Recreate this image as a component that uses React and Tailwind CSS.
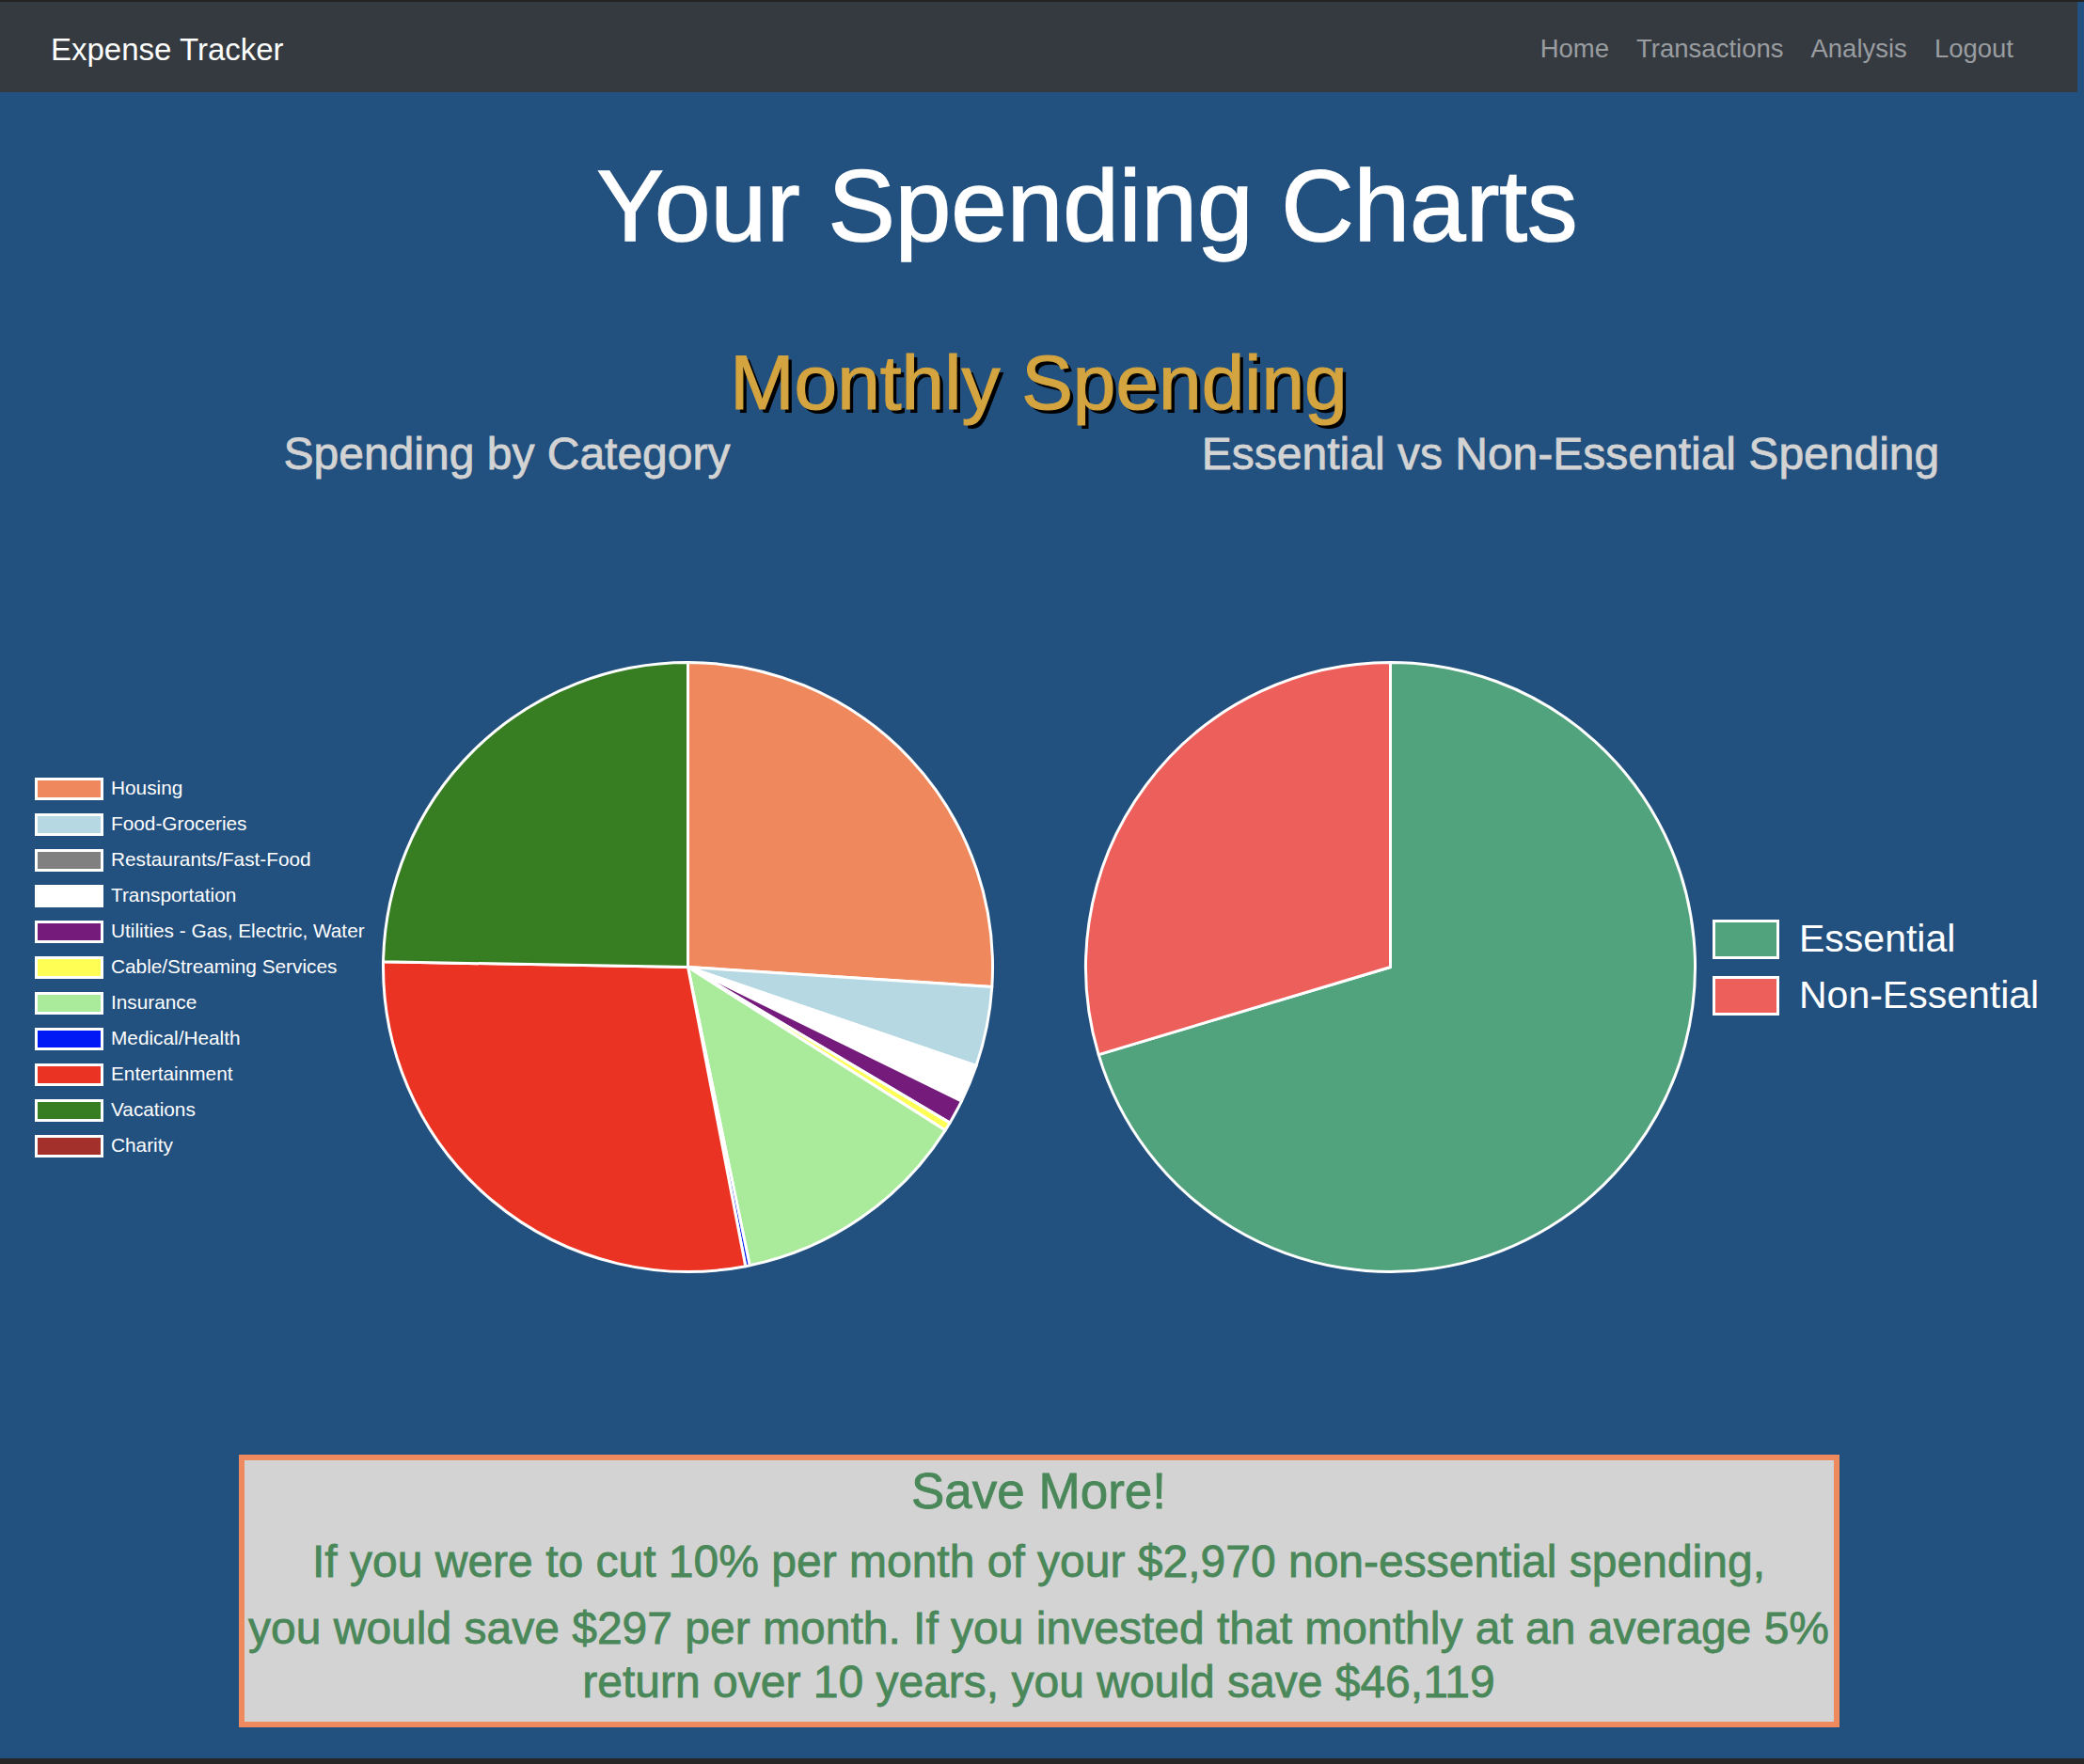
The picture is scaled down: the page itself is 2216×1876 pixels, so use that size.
import React from 'react';

// slice angles are clockwise from 12 o'clock, like chart.js draws them
const categories = [
  { label: 'Housing', color: '#ef885d', start: 0, end: 93.7 },
  { label: 'Food-Groceries', color: '#b6d8e3', start: 93.7, end: 108.9 },
  { label: 'Restaurants/Fast-Food', color: '#808080', start: 108.9, end: 108.9 },
  { label: 'Transportation', color: '#ffffff', start: 108.9, end: 116.1 },
  { label: 'Utilities - Gas, Electric, Water', color: '#741b7b', start: 116.1, end: 120.75 },
  { label: 'Cable/Streaming Services', color: '#fffe54', start: 120.75, end: 122.4 },
  { label: 'Insurance', color: '#a9eb9b', start: 122.4, end: 168.3 },
  { label: 'Medical/Health', color: '#0019f5', start: 168.3, end: 169.1 },
  { label: 'Entertainment', color: '#ea3323', start: 169.1, end: 271 },
  { label: 'Vacations', color: '#377d22', start: 271, end: 360 },
  { label: 'Charity', color: '#a3302b', start: 360, end: 360 },
];

const essentials = [
  { label: 'Essential', color: '#51a37d', start: 0, end: 253.3 },
  { label: 'Non-Essential', color: '#ed5f5a', start: 253.3, end: 360 },
];

const navLinks = ['Home', 'Transactions', 'Analysis', 'Logout'];

function Pie({ slices, size = 653, r = 324 }) {
  const c = size / 2;
  const pt = (deg) => {
    const a = (deg * Math.PI) / 180;
    return [c + r * Math.sin(a), c - r * Math.cos(a)];
  };

  return (
    <svg width={size} height={size} className="shrink-0">
      {slices.filter((s) => s.end > s.start).map((s) => {
        const [x1, y1] = pt(s.start);
        const [x2, y2] = pt(s.end);
        const large = s.end - s.start > 180 ? 1 : 0;
        return (
          <path key={s.label}
            d={`M${c} ${c} L${x1} ${y1} A${r} ${r} 0 ${large} 1 ${x2} ${y2} Z`}
            fill={s.color} stroke="#ffffff" strokeWidth="3" strokeLinejoin="round" />
        );
      })}
    </svg>
  );
}

export default function App() {
  return (
    <div className="min-h-[1876px] flex flex-col bg-[#22507f] font-['Liberation_Sans',Arial,sans-serif]">
      <div className="h-[2px] bg-[#232323]" />

      <nav className="mr-[7px] h-[96px] pt-[4px] pl-[54px] pr-[68px] flex items-center justify-between bg-[#343a40]">
        <a className="text-[33px] leading-none text-white">Expense Tracker</a>
        <div className="flex gap-[29px] text-[27.5px] leading-none text-[#9a9da0]">
          {navLinks.map((l) => <a key={l}>{l}</a>)}
        </div>
      </nav>

      <main className="w-[2209px] flex-1">
        <h1 className="mt-[68px] pl-[103px] text-center text-[107px] leading-none text-white [-webkit-text-stroke:1.5px_currentColor]">
          Your Spending Charts
        </h1>
        <h2 className="mt-[93px] text-center text-[82px] leading-none text-[#d3a43f] [-webkit-text-stroke:1.2px_currentColor] [text-shadow:4px_4px_0_#000]">
          Monthly Spending
        </h2>

        <div className="mt-[11px] grid grid-cols-[1078px_1078px] gap-x-[53px]">
          <section>
            <h3 className="text-center text-[48px] leading-none text-[#d3d3d3] [-webkit-text-stroke:0.8px_currentColor]">Spending by Category</h3>
            <div className="h-[1040px] pt-[3px] pl-[37px] flex items-center">
              <ul className="w-[368px] shrink-0 flex flex-col gap-[14px]">
                {categories.map((c) => (
                  <li key={c.label} className="h-[24px] flex items-center">
                    <span className="w-[73px] h-[24px] shrink-0 border-[3px] border-white" style={{ backgroundColor: c.color }} />
                    <span className="ml-[8px] text-[20.8px] leading-none text-white whitespace-nowrap">{c.label}</span>
                  </li>
                ))}
              </ul>
              <Pie slices={categories} />
            </div>
          </section>

          <section>
            <h3 className="text-center text-[48px] leading-none text-[#d3d3d3] [-webkit-text-stroke:0.8px_currentColor]">Essential vs Non-Essential Spending</h3>
            <div className="h-[1040px] pt-[3px] pl-[21px] flex items-center">
              <Pie slices={essentials} />
              <ul className="ml-[16px] flex flex-col gap-[18px]">
                {essentials.map((e) => (
                  <li key={e.label} className="h-[42px] flex items-center">
                    <span className="w-[71px] h-[42px] shrink-0 border-[3px] border-white" style={{ backgroundColor: e.color }} />
                    <span className="ml-[21px] text-[41px] leading-none text-white whitespace-nowrap">{e.label}</span>
                  </li>
                ))}
              </ul>
            </div>
          </section>
        </div>

        <div className="mx-auto w-[1702px] border-[6px] border-[#ef8a5f] bg-[#d3d3d3] pt-[6px] pb-[13px] text-center text-[#4a885a] [-webkit-text-stroke:0.8px_currentColor]">
          <h4 className="text-[53px] leading-none">Save More!</h4>
          <p className="mt-[20px] text-[48px] leading-[1.2] whitespace-nowrap">
            If you were to cut 10% per month of your $2,970 non-essential spending,
          </p>
          <p className="mt-[13px] text-[48px] leading-[1.2] whitespace-nowrap">
            you would save $297 per month. If you invested that monthly at an average 5%<br />
            return over 10 years, you would save $46,119
          </p>
        </div>
      </main>

      <div className="h-[6px] bg-[#262626]" />
    </div>
  );
}
